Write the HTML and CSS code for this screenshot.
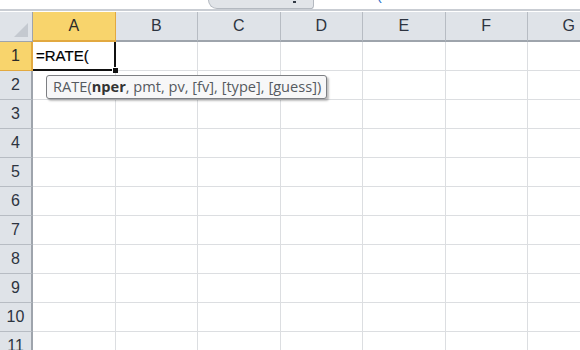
FILE: index.html
```html
<!DOCTYPE html>
<html lang="en">
<head>
    <meta charset="UTF-8">
    <title>Sheet1 - RATE</title>
    <link rel="stylesheet" href="styles.css">
</head>
<body>
    <!-- Formula bar strip (mostly cut off) -->
    <div class="formula-bar">
        <div class="name-box"></div>
        <div class="fx-tab"><span class="fx-mark"></span></div>
        <div class="formula-input"><span class="formula-text">=RATE<span class="paren">(</span></span></div>
    </div>

    <!-- Worksheet grid -->
    <div class="sheet">
        <div class="grid">
            <div class="corner"><span class="corner-tri"></span></div>
            <div class="col-head active">A</div>
            <div class="col-head">B</div>
            <div class="col-head">C</div>
            <div class="col-head">D</div>
            <div class="col-head">E</div>
            <div class="col-head">F</div>
            <div class="col-head">G</div>

            <div class="row-head active">1</div>
            <div class="cell editing">=RATE(<span class="fill-handle"></span></div>
            <div class="cell"></div><div class="cell"></div><div class="cell"></div><div class="cell"></div><div class="cell"></div><div class="cell"></div>

            <div class="row-head">2</div>
            <div class="cell"></div><div class="cell"></div><div class="cell"></div><div class="cell"></div><div class="cell"></div><div class="cell"></div><div class="cell"></div>
            <div class="row-head">3</div>
            <div class="cell"></div><div class="cell"></div><div class="cell"></div><div class="cell"></div><div class="cell"></div><div class="cell"></div><div class="cell"></div>
            <div class="row-head">4</div>
            <div class="cell"></div><div class="cell"></div><div class="cell"></div><div class="cell"></div><div class="cell"></div><div class="cell"></div><div class="cell"></div>
            <div class="row-head">5</div>
            <div class="cell"></div><div class="cell"></div><div class="cell"></div><div class="cell"></div><div class="cell"></div><div class="cell"></div><div class="cell"></div>
            <div class="row-head">6</div>
            <div class="cell"></div><div class="cell"></div><div class="cell"></div><div class="cell"></div><div class="cell"></div><div class="cell"></div><div class="cell"></div>
            <div class="row-head">7</div>
            <div class="cell"></div><div class="cell"></div><div class="cell"></div><div class="cell"></div><div class="cell"></div><div class="cell"></div><div class="cell"></div>
            <div class="row-head">8</div>
            <div class="cell"></div><div class="cell"></div><div class="cell"></div><div class="cell"></div><div class="cell"></div><div class="cell"></div><div class="cell"></div>
            <div class="row-head">9</div>
            <div class="cell"></div><div class="cell"></div><div class="cell"></div><div class="cell"></div><div class="cell"></div><div class="cell"></div><div class="cell"></div>
            <div class="row-head">10</div>
            <div class="cell"></div><div class="cell"></div><div class="cell"></div><div class="cell"></div><div class="cell"></div><div class="cell"></div><div class="cell"></div>
            <div class="row-head">11</div>
            <div class="cell"></div><div class="cell"></div><div class="cell"></div><div class="cell"></div><div class="cell"></div><div class="cell"></div><div class="cell"></div>
        </div>

        <!-- Function argument tooltip -->
        <div class="tooltip">RATE(<b>nper</b>, pmt, pv, [fv], [type], [guess])</div>
    </div>
</body>
</html>
```

FILE: styles.css
```css
/* Page */
body {
    margin: 0;
    width: 580px;
    height: 350px;
    overflow: hidden;
    background: #ffffff;
    font-family: 'Liberation Sans', Arial, sans-serif;
}

/* Formula bar strip at the very top */
.formula-bar {
    display: flex;
    height: 9px;
    background: #ffffff;
    border-bottom: 2px solid #c9cdd3;
    overflow: hidden;
}

.name-box {
    width: 208px;
}

.fx-tab {
    position: relative;
    width: 106px;
    background: #e1e4e8;
    border: 1px solid #b4b9c0;
    border-top: none;
    border-radius: 0 0 4px 10px;
    box-sizing: border-box;
}

.fx-mark {
    position: absolute;
    left: 84px;
    top: 1px;
    width: 3px;
    height: 2px;
    background: #333a44;
}

.formula-input {
    flex: 1;
    overflow: hidden;
}

.formula-text {
    display: block;
    margin-top: -14px;
    padding-left: 15px;
    font-size: 15px;
    line-height: 17px;
    color: transparent;
}

.formula-text .paren {
    color: #2c6fc9;
}

/* Sheet */
.sheet {
    position: relative;
    border-top: 1px solid #ffffff;
}

.grid {
    display: grid;
    grid-template-columns: 33px repeat(7, 82.5px);
    grid-template-rows: 30px repeat(11, 29px);
}

.corner {
    position: relative;
    background: #dfe3e8;
    border-right: 1px solid #9ea4ac;
    border-bottom: 1px solid #9ea4ac;
}

.corner-tri {
    position: absolute;
    right: 4px;
    bottom: 4px;
    width: 0;
    height: 0;
    border-left: 14px solid transparent;
    border-bottom: 14px solid #c4c9d0;
}

.col-head {
    display: flex;
    align-items: center;
    justify-content: center;
    background: #dfe3e8;
    border-right: 1px solid #b7bcc3;
    border-bottom: 2px solid #9ea4ac;
    font-size: 16px;
    color: #2d3440;
}

.row-head {
    display: flex;
    align-items: center;
    justify-content: center;
    background: #dfe3e8;
    border-right: 2px solid #9ea4ac;
    border-bottom: 1px solid #b7bcc3;
    font-size: 16px;
    color: #2d3440;
}

.col-head.active,
.row-head.active {
    background: #f8d46c;
    border-color: #e2a940;
    color: #2a2a2a;
}

.cell {
    border-right: 1px solid #dcdee1;
    border-bottom: 1px solid #dcdee1;
}

/* Active cell being edited */
.cell.editing {
    position: relative;
    border-right: 2px solid #111111;
    border-bottom: 2px solid #111111;
    padding-left: 3px;
    font-size: 15px;
    line-height: 28px;
    color: #000000;
    -webkit-text-stroke: 0.2px #000000;
}

.fill-handle {
    position: absolute;
    right: -4px;
    bottom: -4px;
    width: 5px;
    height: 5px;
    background: #111111;
    border-top: 1px solid #ffffff;
    border-left: 1px solid #ffffff;
}

/* Function argument tooltip */
.tooltip {
    position: absolute;
    left: 46px;
    top: 63px;
    height: 22px;
    padding: 0 5px 0 6px;
    background: #f7f7f8;
    border: 1px solid #7d7f83;
    border-radius: 3px;
    box-shadow: 2px 2px 2px rgba(0, 0, 0, 0.25);
    font-family: 'Open Sans', 'Liberation Sans', sans-serif;
    font-size: 14.6px;
    line-height: 21px;
    color: #555a60;
    white-space: nowrap;
}

.tooltip b {
    color: #333333;
}
```
